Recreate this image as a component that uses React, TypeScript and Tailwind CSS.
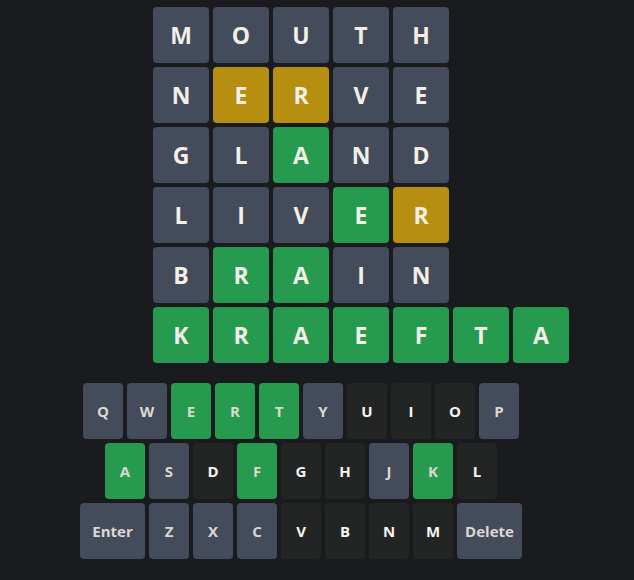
import React from 'react';

type Status = 'absent' | 'present' | 'correct' | 'unused';

const guesses: { letter: string; status: Status }[][] = [
  [['M', 'absent'], ['O', 'absent'], ['U', 'absent'], ['T', 'absent'], ['H', 'absent']],
  [['N', 'absent'], ['E', 'present'], ['R', 'present'], ['V', 'absent'], ['E', 'absent']],
  [['G', 'absent'], ['L', 'absent'], ['A', 'correct'], ['N', 'absent'], ['D', 'absent']],
  [['L', 'absent'], ['I', 'absent'], ['V', 'absent'], ['E', 'correct'], ['R', 'present']],
  [['B', 'absent'], ['R', 'correct'], ['A', 'correct'], ['I', 'absent'], ['N', 'absent']],
  [['K', 'correct'], ['R', 'correct'], ['A', 'correct'], ['E', 'correct'], ['F', 'correct'], ['T', 'correct'], ['A', 'correct']],
].map(row => row.map(([letter, status]) => ({ letter, status: status as Status })));

const keyStatus: Record<string, Status> = {
  Q: 'absent', W: 'absent', E: 'correct', R: 'correct', T: 'correct', Y: 'absent',
  U: 'unused', I: 'unused', O: 'unused', P: 'absent',
  A: 'correct', S: 'absent', D: 'unused', F: 'correct', G: 'unused', H: 'unused',
  J: 'absent', K: 'correct', L: 'unused',
  Enter: 'absent', Z: 'absent', X: 'absent', C: 'absent', V: 'unused', B: 'unused',
  N: 'unused', M: 'unused', Delete: 'absent',
};

const rows = [
  ['Q', 'W', 'E', 'R', 'T', 'Y', 'U', 'I', 'O', 'P'],
  ['A', 'S', 'D', 'F', 'G', 'H', 'J', 'K', 'L'],
  ['Enter', 'Z', 'X', 'C', 'V', 'B', 'N', 'M', 'Delete'],
];

const tileColor: Record<Status, string> = {
  absent: 'bg-[#444b5b]',
  present: 'bg-[#b78f10]',
  correct: 'bg-[#269b4f]',
  unused: 'bg-[#232524]',
};

export default function App() {
  return (
    <div className="min-h-[580px] w-[634px] bg-[#1a1b1e] font-['Open_Sans','Liberation_Sans',sans-serif]">
      <div className="w-[602px] flex flex-col items-center pt-[7px]">
        {/* Board */}
        <div className="w-[296px] flex flex-col gap-1">
          {guesses.map((row, i) => (
            <div key={i} className="flex gap-1">
              {row.map((tile, j) => (
                <div
                  key={j}
                  className={`w-14 h-14 shrink-0 rounded flex items-center justify-center text-[23px] font-bold text-[#f3efe6] ${tileColor[tile.status]}`}
                >
                  {tile.letter}
                </div>
              ))}
            </div>
          ))}
        </div>

        {/* Keyboard */}
        <div className="mt-5 flex flex-col items-center gap-1">
          {rows.map((row, i) => (
            <div key={i} className="flex gap-1">
              {row.map(key => {
                const status = keyStatus[key];
                const wide = key === 'Enter' || key === 'Delete';
                return (
                  <button
                    key={key}
                    className={`h-14 rounded flex items-center justify-center text-[15px] font-bold ${
                      wide ? 'w-[65px]' : 'w-10'
                    } ${tileColor[status]} ${status === 'unused' ? 'text-[#f5f5f5]' : 'text-[#dcd8d0]'}`}
                  >
                    {key}
                  </button>
                );
              })}
            </div>
          ))}
        </div>
      </div>
    </div>
  );
}
